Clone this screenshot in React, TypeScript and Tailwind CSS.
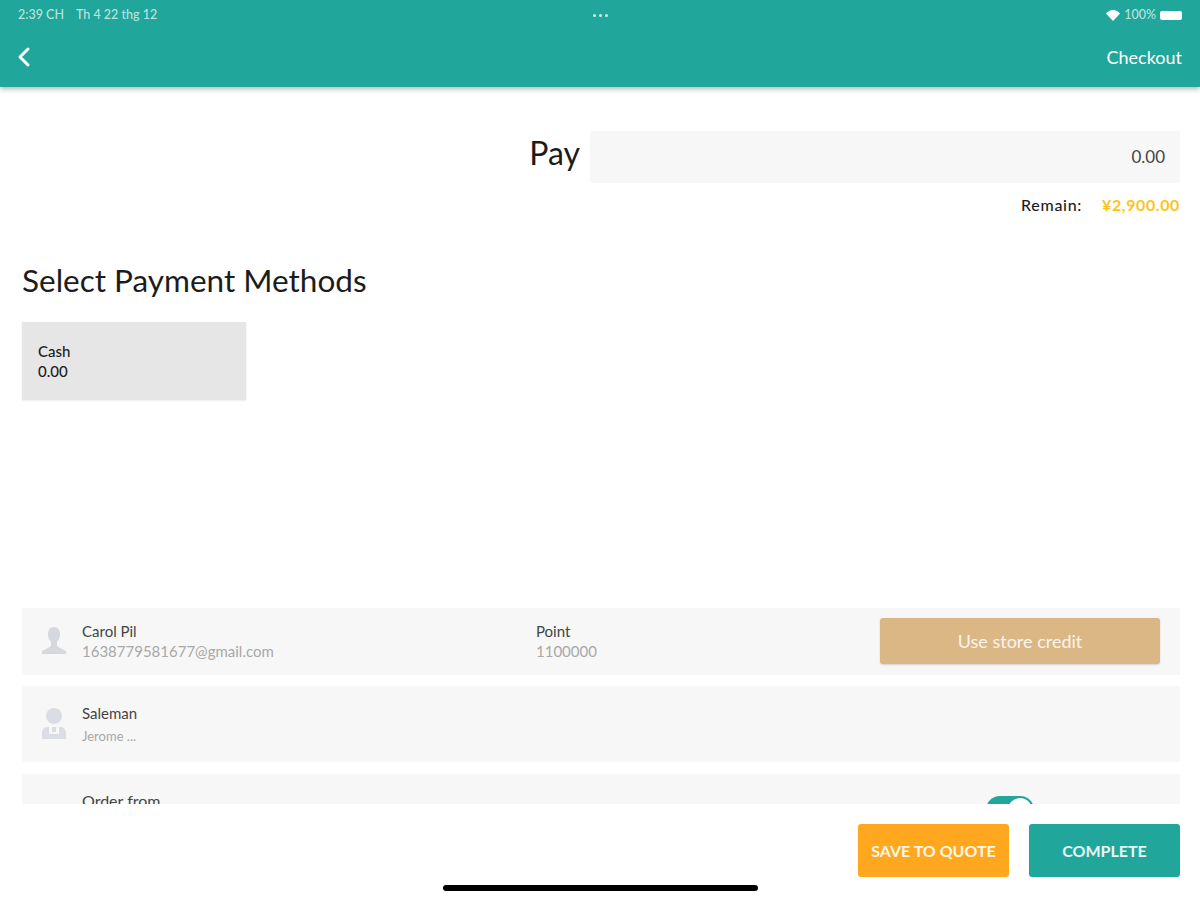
import { ChevronLeft } from "lucide-react"

function UserIcon() {
  return (
    <svg width="28" height="28" viewBox="0 0 28 28" className="text-[#d5d9de]" fill="currentColor">
      <path d="M14 0c-4 0-6 3-6 7 0 3 1 6 3 8v3c0 1-1 2-3 3l-6 3v3h24v-3l-6-3c-2-1-3-2-3-3v-3c2-2 3-5 3-8 0-4-2-7-6-7z" />
    </svg>
  )
}

function SalesIcon() {
  return (
    <svg width="26" height="32" viewBox="0 0 26 32" className="text-[#dadee4]" fill="currentColor">
      <circle cx="13" cy="8" r="8" />
      <path d="M1 31v-6c0-3 2-6 5-6h2v7h10v-7h2c3 0 5 3 5 6v6z" />
      <path d="M11 19h4v5h-4z" />
    </svg>
  )
}

export default function App() {
  return (
    <div className="relative flex h-[900px] w-[1200px] flex-col overflow-hidden bg-white font-['Lato',sans-serif] text-[#1c1c1c]">
      <header className="z-10 h-[87px] shrink-0 bg-[#20a69a] px-[18px] text-white shadow-[0_2px_5px_rgba(0,0,0,0.3)]">
        <div className="flex h-[30px] items-center justify-between text-[12.5px] font-medium text-white/70">
          <div className="flex w-[300px] gap-[12px]">
            <span>2:39 CH</span>
            <span>Th 4 22 thg 12</span>
          </div>
          <div className="flex gap-[3px]">
            <span className="h-[3px] w-[3px] rounded-full bg-white/80" />
            <span className="h-[3px] w-[3px] rounded-full bg-white/80" />
            <span className="h-[3px] w-[3px] rounded-full bg-white/80" />
          </div>
          <div className="flex w-[300px] items-center justify-end gap-[4px]">
            <svg width="14" height="11" viewBox="0 0 14 11" className="text-white" fill="currentColor">
              <path d="M7 11 0 3.5C2 1.3 4.3 0 7 0s5 1.3 7 3.5z" />
            </svg>
            <span>100%</span>
            <span className="h-[9px] w-[22px] rounded-[2px] bg-white" />
          </div>
        </div>
        <div className="flex h-[54px] items-center justify-between">
          <ChevronLeft size={32} strokeWidth={2.25} className="-ml-[10px]" />
          <span className="text-[18px]">Checkout</span>
        </div>
      </header>

      <main className="min-h-0 flex-1 overflow-hidden pl-[22px] pr-[20px] pt-[44px]">
        <div className="flex items-center justify-end gap-[10px]">
          <span className="mb-[8px] text-[32px] leading-none">Pay</span>
          <div className="flex h-[52px] w-[590px] items-center justify-end rounded-[2px] bg-[#f7f7f7] px-[15px] text-[17px] text-[#444]">0.00</div>
        </div>
        <div className="mt-[12px] flex h-[20px] items-center justify-end gap-[20px] text-[16px]">
          <span className="font-medium tracking-[0.7px]">Remain:</span>
          <span className="font-bold tracking-[0.6px] text-[#fcc419]">¥2,900.00</span>
        </div>
        <h2 className="mt-[43px] mb-[20px] text-[31.5px] leading-[44px]">Select Payment Methods</h2>
        <div className="flex h-[78px] w-[224px] flex-col justify-center bg-[#e6e6e6] px-[16px] text-[15px] font-medium leading-[20px] shadow-[0_1px_2px_rgba(0,0,0,0.08)]">
          <span>Cash</span>
          <span>0.00</span>
        </div>

        <div className="mt-[208px] flex flex-col gap-[11px] text-[15px] leading-[20px]">
          <section className="flex h-[67px] items-center bg-[#f7f7f7] pb-[2px] pl-[18px] pr-[20px]">
            <UserIcon />
            <div className="ml-[14px] w-[454px]">
              <div className="text-[#444]">Carol Pil</div>
              <div className="text-[#a8a8a8]">1638779581677@gmail.com</div>
            </div>
            <div className="flex-1">
              <div className="text-[#444]">Point</div>
              <div className="text-[#a8a8a8]">1100000</div>
            </div>
            <button className="h-[46px] w-[280px] rounded-[3px] bg-[#dbb785] text-[18px] text-white/85 shadow-[0_1px_2px_rgba(0,0,0,0.15)]">Use store credit</button>
          </section>

          <section className="mb-[1px] flex h-[76px] items-center rounded-[3px] bg-[#f7f7f7] pl-[19px]">
            <SalesIcon />
            <div className="ml-[15px]">
              <div className="text-[#444]">Saleman</div>
              <div className="mt-[3px] text-[13px] text-[#a8a8a8]">Jerome ...</div>
            </div>
          </section>

          <section className="relative h-[76px] bg-[#f7f7f7] pl-[60px] pt-[17px]">
            <div className="text-[16px] text-[#444]">Order from</div>
            <span className="absolute left-[964px] top-[22px] h-[28px] w-[48px] rounded-full bg-[#20a69a]">
              <span className="absolute right-[2px] top-[2px] h-[24px] w-[24px] rounded-full bg-white" />
            </span>
          </section>
        </div>
      </main>

      <footer className="z-10 flex h-[96px] shrink-0 items-start justify-end gap-[20px] bg-white pr-[20px] pt-[20px] text-[16px] font-bold text-white/90">
        <button className="h-[53px] w-[151px] rounded-[3px] bg-[#ffa81f]">SAVE TO QUOTE</button>
        <button className="h-[53px] w-[151px] rounded-[3px] bg-[#20a69a]">COMPLETE</button>
      </footer>

      <div className="absolute bottom-[9px] left-[443px] z-20 h-[6px] w-[315px] rounded-full bg-black" />
    </div>
  )
}
